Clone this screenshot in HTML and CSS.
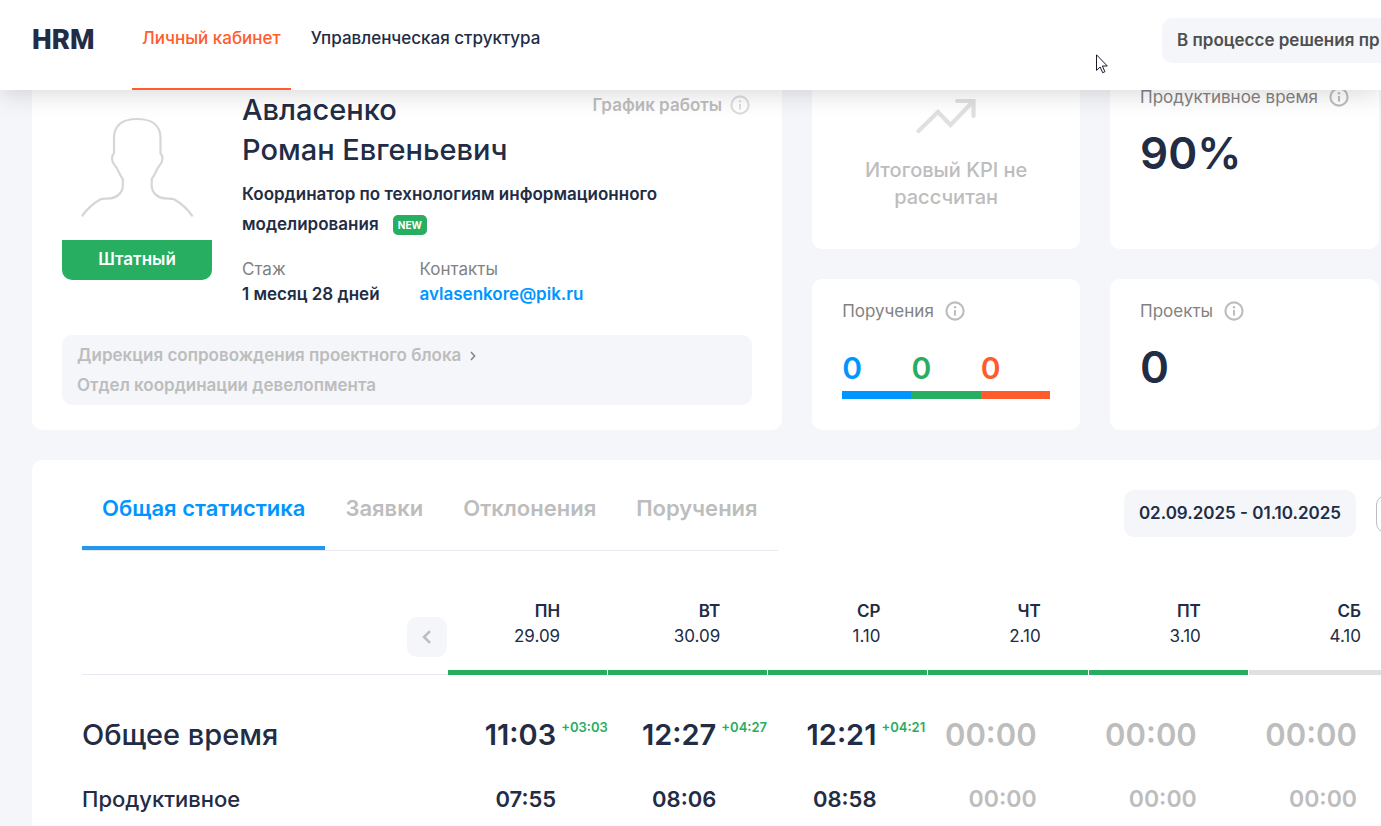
FILE: index.html
```
<!DOCTYPE html>
<html lang="ru">
<head>
<meta charset="utf-8">
<title>HRM — Личный кабинет</title>
<link rel="stylesheet" href="styles.css">
</head>
<body>
<svg class="sprite" aria-hidden="true">
  <symbol id="info" viewBox="0 0 20 20"><circle cx="10" cy="10" r="8.6" fill="none" stroke="currentColor" stroke-width="2.1"/><rect x="9" y="9" width="2" height="5.6" fill="currentColor"/><circle cx="10" cy="6.3" r="1.2" fill="currentColor"/></symbol>
</svg>
<header class="header">
  <a class="logo" href="#">HRM</a>
  <nav class="nav">
    <a class="nav-link active" href="#">Личный кабинет</a>
    <a class="nav-link" href="#">Управленческая структура</a>
  </nav>
  <button class="status" type="button">В процессе решения пр</button>
  <svg class="cursor" viewBox="0 0 12 20" aria-hidden="true"><path d="M.5 .8V16.4L4.1 13 6.7 18.7 8.9 17.7 6.4 12H11.3Z" fill="#fff" stroke="#1b1b2b" stroke-width="1"/></svg>
</header>
<main class="main">
  <section class="cards">
    <article class="card profile">
      <div class="profile-top">
        <div class="photo">
          <svg class="avatar" viewBox="0 0 150 150" aria-hidden="true"><path d="M20.500 125.500C25 119 31 113.500 38.500 109.200C41 108.200 44 108.800 48 108.400C55 107.800 60.800 102.500 60.800 95.500V89C57 84.500 56.500 79.500 53 75.500C49.500 72.500 49 66.500 52 63V48C52 34.500 61.500 29 75 29S98.500 34.500 98.500 48V63C101.500 66.500 101 72.500 97.500 75.500C94 79.500 93.500 84.500 89.700 89V95.500C89.700 102.500 95.500 107.800 102.500 108.400C106.500 108.800 109.500 108.200 112 109.200C119.500 113.500 125.500 119 130 125.500" fill="none" stroke="#d6d6d6" stroke-width="2.200" stroke-linejoin="round" stroke-linecap="round"/></svg>
          <div class="staff">Штатный</div>
        </div>
        <div class="info">
          <div class="info-head">
            <h1 class="name">Авласенко<br>Роман Евгеньевич</h1>
            <div class="schedule">График работы <svg class="ico" aria-hidden="true"><use href="#info"/></svg></div>
          </div>
          <p class="role">Координатор по технологиям информационного моделирования <span class="new">NEW</span></p>
          <dl class="facts">
            <div><dt class="term">Стаж</dt><dd class="value">1 месяц 28 дней</dd></div>
            <div><dt class="term">Контакты</dt><dd class="value"><a class="mail" href="mailto:avlasenkore@pik.ru">avlasenkore@pik.ru</a></dd></div>
          </dl>
        </div>
      </div>
      <div class="org">
        <div>Дирекция сопровождения проектного блока <svg class="sep" viewBox="0 0 6 10" aria-hidden="true"><path d="M1 1L4.600 5 1 9" fill="none" stroke="#828282" stroke-width="1.500"/></svg></div>
        <div>Отдел координации девелопмента</div>
      </div>
    </article>
    <article class="card kpi">
      <svg class="trend" viewBox="0 0 60 36" aria-hidden="true"><path d="M2.500 33L22 14 34.500 27 57 3.500M41 3H57.500V18" fill="none" stroke="#e0e0e0" stroke-width="4.200" stroke-linecap="round"/></svg>
      <p class="kpi-text">Итоговый KPI не рассчитан</p>
    </article>
    <article class="card">
      <h2 class="title">Продуктивное время <svg class="ico" aria-hidden="true"><use href="#info"/></svg></h2>
      <div class="figure">90%</div>
    </article>
    <article class="card">
      <h2 class="title">Поручения <svg class="ico" aria-hidden="true"><use href="#info"/></svg></h2>
      <div class="tasks">
        <div class="task blue">0</div><div class="task green">0</div><div class="task orange">0</div>
      </div>
    </article>
    <article class="card">
      <h2 class="title">Проекты <svg class="ico" aria-hidden="true"><use href="#info"/></svg></h2>
      <div class="figure">0</div>
    </article>
  </section>
  <section class="panel">
    <div class="toolbar">
      <nav class="tabs">
        <a class="tab selected" href="#">Общая статистика</a>
        <a class="tab" href="#">Заявки</a>
        <a class="tab" href="#">Отклонения</a>
        <a class="tab" href="#">Поручения</a>
      </nav>
      <div class="filters">
        <button class="range" type="button">02.09.2025 - 01.10.2025</button>
        <button class="more" type="button" aria-label="Ещё"></button>
      </div>
    </div>
    <table class="stats">
      <thead>
        <tr>
          <th class="lead"><button class="prev" type="button" aria-label="Назад"><svg class="chev" viewBox="0 0 10 14" aria-hidden="true"><path d="M8 1.200L2 7 8 12.800" fill="none" stroke="#bdbdbd" stroke-width="2.500"/></svg></button></th>
          <th class="day"><div class="when">ПН<span class="date">29.09</span></div></th>
          <th class="day"><div class="when">ВТ<span class="date">30.09</span></div></th>
          <th class="day"><div class="when">СР<span class="date">1.10</span></div></th>
          <th class="day"><div class="when">ЧТ<span class="date">2.10</span></div></th>
          <th class="day"><div class="when">ПТ<span class="date">3.10</span></div></th>
          <th class="day"><div class="when off">СБ<span class="date">4.10</span></div></th>
        </tr>
      </thead>
      <tbody>
        <tr class="total">
          <th class="row-name" scope="row">Общее время</th>
          <td class="cell"><span class="time">11:03<span class="delta">+03:03</span></span></td>
          <td class="cell"><span class="time">12:27<span class="delta">+04:27</span></span></td>
          <td class="cell"><span class="time">12:21<span class="delta">+04:21</span></span></td>
          <td class="cell none">00:00</td>
          <td class="cell none">00:00</td>
          <td class="cell none">00:00</td>
        </tr>
        <tr class="part">
          <th class="row-name" scope="row">Продуктивное</th>
          <td class="cell">07:55</td>
          <td class="cell">08:06</td>
          <td class="cell">08:58</td>
          <td class="cell none">00:00</td>
          <td class="cell none">00:00</td>
          <td class="cell none">00:00</td>
        </tr>
      </tbody>
    </table>
  </section>
</main>
</body>
</html>
```
FILE: styles.css
```
* { box-sizing: border-box; }
body { margin: 0; min-height: 100vh; overflow: hidden; display: flex; flex-direction: column; background: #f4f6fa; color: #222c45; font: 600 17px/25px Inter, sans-serif; }
a { color: inherit; text-decoration: none; }
button { font: inherit; color: inherit; border: 0; padding: 0; background: #f4f6fa; border-radius: 10px; }
h1, h2, p, dl, dd { margin: 0; font-weight: 600; }
.sprite { position: absolute; width: 0; height: 0; }

.header { position: relative; z-index: 2; flex: none; height: 90px; display: flex; align-items: flex-start; padding-left: 32px; background: #fff; box-shadow: 0 4px 24px rgba(0, 0, 0, .15); }
.logo { font: 900 28px/36px Roboto, sans-serif; padding-top: 22px; width: 100px; }
.nav { display: flex; gap: 10px; align-self: stretch; }
.nav-link { padding: 26px 10px 0; border-bottom: 2px solid transparent; white-space: nowrap; font-weight: 500; }
.nav-link.active { color: #ff5c2e; border-color: #ff5c2e; }
.status { margin: 18px 0 0 auto; flex: 0 0 219px; height: 45px; padding-left: 15px; text-align: left; white-space: nowrap; overflow: hidden; border-radius: 10px 0 0 10px; color: #4f4f4f; }
.cursor { position: absolute; left: 1096px; top: 54px; width: 12px; height: 20px; }

.main { flex: 1; display: flex; flex-direction: column; gap: 30px; margin-top: -25px; padding-left: 32px; }
.cards { display: grid; grid-template-columns: 2.8fr 1fr 1fr; grid-template-rows: 184px 151px; gap: 30px; padding-right: 2px; }
.card { background: #fff; border-radius: 10px; padding: 20px 30px; }
.profile { grid-row: span 2; padding: 25px 30px; }
.profile-top { display: flex; gap: 30px; }
.photo { flex: 0 0 150px; }
.avatar { display: block; width: 150px; height: 150px; }
.staff { height: 40px; line-height: 38px; text-align: center; color: #fff; background: #27ae60; border-radius: 0 0 10px 10px; }
.info { flex: 1; }
.info-head { display: flex; justify-content: space-between; align-items: flex-start; }
.name { font-size: 29px; line-height: 40px; font-weight: 500; }
.schedule { display: flex; align-items: center; gap: 8px; line-height: 30px; margin-right: 2px; color: #bdbdbd; }
.schedule .ico { color: #dedede; }
.ico { width: 20px; height: 20px; color: #bdbdbd; }
.role { line-height: 30px; margin-top: 9px; max-width: 440px; }
.new { display: inline-block; margin-left: 10px; padding: 0 5px; border-radius: 5px; background: #27ae60; color: #fff; font-size: 10px; font-weight: 700; line-height: 20px; vertical-align: 1px; }
.facts { display: flex; gap: 40px; margin-top: 18px; }
.term { color: #828282; font-weight: 400; }
.mail { color: #0096ff; }
.org { margin-top: 28px; padding: 5px 15px; border-radius: 10px; background: #f4f6fa; color: #bdbdbd; line-height: 30px; }
.sep { width: 6px; height: 10px; margin-left: 4px; }

.kpi { padding-top: 33px; text-align: center; color: #bdbdbd; font-size: 20px; line-height: 27px; }
.kpi-text { font-weight: 500; }
.trend { display: block; width: 60px; height: 36px; margin: 0 auto 23px; }
.title { display: flex; align-items: center; gap: 11px; font-size: 17px; line-height: 24px; font-weight: 400; color: #828282; white-space: nowrap; }
.figure { margin-top: 14px; font-size: 44px; line-height: 60px; }
.tasks { display: flex; margin-top: 25px; }
.task { flex: 1; padding-bottom: 3px; border-bottom: 8px solid; font-size: 30px; line-height: 40px; }
.blue { color: #0096ff; }
.green { color: #27ae60; }
.orange { color: #ff5c2e; }

.panel { flex: 1; background: #fff; border-radius: 10px 0 0 0; padding: 30px 0 0 50px; overflow: hidden; }
.toolbar { display: flex; justify-content: space-between; align-items: flex-start; }
.tabs { display: flex; border-bottom: 1px solid #e9eaf2; font-size: 22px; line-height: 36px; color: #bdbdbd; white-space: nowrap; }
.tab { padding: 0 20px 20px; border-bottom: 4px solid transparent; }
.tab.selected { color: #0096ff; border-color: #2196f3; }
.filters { display: flex; align-items: center; gap: 20px; margin-right: -35px; }
.range { height: 47px; padding: 0 15px; white-space: nowrap; }
.more { width: 40px; height: 38px; border: 1px solid #bdbdbd; background: #fff; }

.stats { width: calc(100% + 28px); table-layout: fixed; border-collapse: separate; border-spacing: 0; }
.stats th, .stats td { padding: 0; text-align: right; white-space: nowrap; }
.stats .lead { width: 366px; vertical-align: bottom; padding: 0 1px 17px 0; border-bottom: 1px solid #e9eaf2; line-height: 0; }
.prev { width: 40px; height: 40px; }
.chev { width: 10px; height: 14px; }
.when { margin-right: 1px; padding: 48px 47px 21px 0; border-bottom: 5px solid #27ae60; font-weight: 600; }
.when.off { border-color: #e0e0e0; }
.date { display: block; font-weight: 400; }
.stats .row-name { text-align: left; font-weight: 500; }
.stats .cell { padding-right: 52px; }
.total { height: 112px; font-size: 29px; }
.stats .total > * { vertical-align: top; padding-top: 47px; }
.part { height: 25px; font-size: 22px; }
.total .cell { font-size: 29px; }
.part .cell { font-size: 22px; }
.total .none { font-size: 31px; }
.part .none { font-size: 23px; }
.none { color: #bdbdbd; }
.time { position: relative; }
.delta { position: absolute; left: 100%; top: 2px; margin-left: 5px; font-size: 13px; line-height: 16px; color: #27ae60; }
```
